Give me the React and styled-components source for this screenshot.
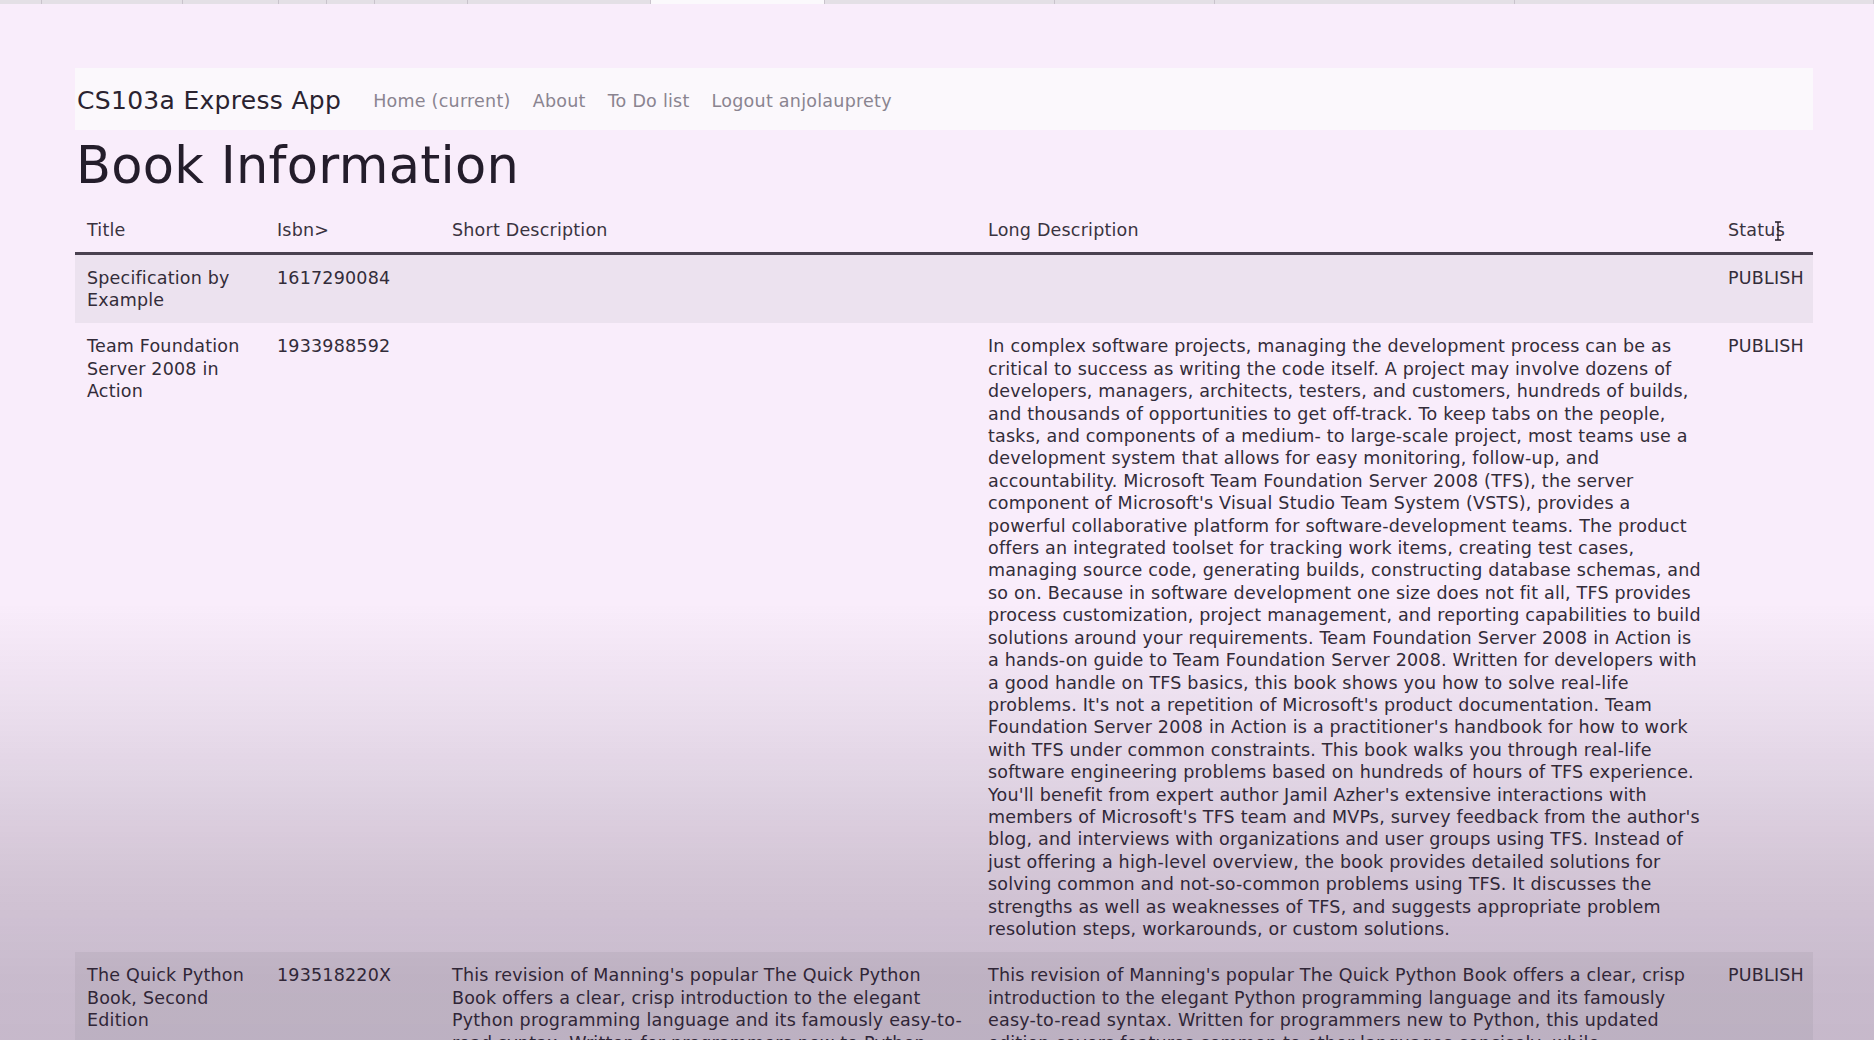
import React from "react";
import styled, { createGlobalStyle } from "styled-components";

const books = [
    {
        title: "Specification by Example",
        isbn: "1617290084",
        shortDescription: "",
        longDescription: "",
        status: "PUBLISH",
    },
    {
        title: "Team Foundation Server 2008 in Action",
        isbn: "1933988592",
        shortDescription: "",
        longDescription:
            "In complex software projects, managing the development process can be as critical to success as writing the code itself. A project may involve dozens of developers, managers, architects, testers, and customers, hundreds of builds, and thousands of opportunities to get off-track. To keep tabs on the people, tasks, and components of a medium- to large-scale project, most teams use a development system that allows for easy monitoring, follow-up, and accountability. Microsoft Team Foundation Server 2008 (TFS), the server component of Microsoft's Visual Studio Team System (VSTS), provides a powerful collaborative platform for software-development teams. The product offers an integrated toolset for tracking work items, creating test cases, managing source code, generating builds, constructing database schemas, and so on. Because in software development one size does not fit all, TFS provides process customization, project management, and reporting capabilities to build solutions around your requirements. Team Foundation Server 2008 in Action is a hands-on guide to Team Foundation Server 2008. Written for developers with a good handle on TFS basics, this book shows you how to solve real-life problems. It's not a repetition of Microsoft's product documentation. Team Foundation Server 2008 in Action is a practitioner's handbook for how to work with TFS under common constraints. This book walks you through real-life software engineering problems based on hundreds of hours of TFS experience. You'll benefit from expert author Jamil Azher's extensive interactions with members of Microsoft's TFS team and MVPs, survey feedback from the author's blog, and interviews with organizations and user groups using TFS. Instead of just offering a high-level overview, the book provides detailed solutions for solving common and not-so-common problems using TFS. It discusses the strengths as well as weaknesses of TFS, and suggests appropriate problem resolution steps, workarounds, or custom solutions.",
        status: "PUBLISH",
    },
    {
        title: "The Quick Python Book, Second Edition",
        isbn: "193518220X",
        shortDescription:
            "This revision of Manning's popular The Quick Python Book offers a clear, crisp introduction to the elegant Python programming language and its famously easy-to-read syntax. Written for programmers new to Python, this updated edition covers features common to other languages concisely, while introducing Python's comprehensive standard functions library and unique features in detail.",
        longDescription:
            "This revision of Manning's popular The Quick Python Book offers a clear, crisp introduction to the elegant Python programming language and its famously easy-to-read syntax. Written for programmers new to Python, this updated edition covers features common to other languages concisely, while introducing Python's comprehensive standard functions library and unique features in detail. After exploring Python's syntax, control flow, and basic data structures, the book shows how to create, test, and deploy full applications and larger code libraries.",
        status: "PUBLISH",
    },
];

// browser tab strip peeking in at the very top of the frame
const tabs = [42, 141, 96, 48, 48, 93, 183, 174, 230, 160, 300, 359];

export default function App() {
    return (
        <>
            <GlobalStyle />
            <TabStrip>
                {tabs.map((w, i) => (
                    <Tab key={i} $width={w} $active={i === 7} />
                ))}
            </TabStrip>
            <Container>
                <Navbar>
                    <Brand>CS103a Express App</Brand>
                    <NavList>
                        <NavLink>Home (current)</NavLink>
                        <NavLink>About</NavLink>
                        <NavLink>To Do list</NavLink>
                        <NavLink>Logout anjolauprety</NavLink>
                    </NavList>
                </Navbar>
                <Heading>Book Information</Heading>
                <BookTable>
                    <colgroup>
                        <col style={{ width: 190 }} />
                        <col style={{ width: 175 }} />
                        <col style={{ width: 536 }} />
                        <col style={{ width: 740 }} />
                        <col style={{ width: 97 }} />
                    </colgroup>
                    <thead>
                        <tr>
                            <Th>Title</Th>
                            <Th>Isbn&gt;</Th>
                            <Th>Short Description</Th>
                            <Th>Long Description</Th>
                            <Th>
                                Status
                                <Cursor viewBox="0 0 8 20">
                                    <path d="M1 1h2.5l0.5 0.6 0.5-0.6H7M4 1.6v16.8M1 19h2.5l0.5-0.6 0.5 0.6H7" stroke="#1c1620" strokeWidth="1.3" fill="none" />
                                </Cursor>
                            </Th>
                        </tr>
                    </thead>
                    <tbody>
                        {books.map((book, i) => (
                            <Row key={book.isbn} $striped={i % 2 === 0}>
                                <Td>{book.title}</Td>
                                <Td>{book.isbn}</Td>
                                <Td>{book.shortDescription}</Td>
                                <Td>{book.longDescription}</Td>
                                <Td>{book.status}</Td>
                            </Row>
                        ))}
                    </tbody>
                </BookTable>
            </Container>
            <Vignette />
        </>
    );
}

const GlobalStyle = createGlobalStyle`
    body {
        margin: 0;
        background-color: #f9edfb;
        font-family: "DejaVu Sans", "Liberation Sans", sans-serif;
        color: #2f2835;
    }
`;

const TabStrip = styled.div`
    height: 4px;
    display: flex;
    background-color: #dcd7de;
    overflow: hidden;
`;

const Tab = styled.div`
    flex: 0 0 ${(p) => p.$width}px;
    height: 100%;
    box-sizing: border-box;
    border-right: 1px solid #c9c3cc;
    background-color: ${(p) => (p.$active ? "#fbf9fc" : "#e4e0e6")};
`;

const Container = styled.div`
    padding: 64px 61px 0 75px;
`;

const Navbar = styled.nav`
    height: 62px;
    box-sizing: border-box;
    padding: 4px 0 0 2px;
    display: flex;
    align-items: center;
    background-color: #fbf8fc;
`;

const Brand = styled.div`
    font-size: 25px;
    line-height: 1.5;
    letter-spacing: 0.3px;
    color: #2a2330;
    margin-right: 21px;
`;

const NavList = styled.div`
    display: flex;
    align-items: center;
`;

const NavLink = styled.div`
    font-size: 17.5px;
    line-height: 1.5;
    letter-spacing: 0.25px;
    color: #8a8490;
    padding: 0 11px;
`;

const Heading = styled.h1`
    font-size: 51px;
    font-weight: 400;
    line-height: 1.2;
    letter-spacing: 0.3px;
    color: #241d2b;
    margin: 5px 0 11px 1px;
`;

const BookTable = styled.table`
    width: 100%;
    border-collapse: collapse;
    table-layout: fixed;
    font-size: 17.5px;
    line-height: 22.4px;
    letter-spacing: 0.2px;
`;

const Th = styled.th`
    position: relative;
    text-align: left;
    font-weight: 400;
    color: #3a3340;
    padding: 12px 12px 10px;
    border-bottom: 3px solid #4a4150;
    vertical-align: bottom;
`;

const Cursor = styled.svg`
    position: absolute;
    left: 58px;
    top: 14px;
    width: 8px;
    height: 20px;
`;

const Row = styled.tr`
    background-color: ${(p) => (p.$striped ? "#ece2ef" : "transparent")};
`;

const Td = styled.td`
    padding: 12px;
    vertical-align: top;
    color: #332c39;
`;

const Vignette = styled.div`
    position: fixed;
    inset: 0;
    pointer-events: none;
    background: linear-gradient(
        to bottom,
        rgba(40, 20, 50, 0) 0%,
        rgba(40, 20, 50, 0) 58%,
        rgba(40, 20, 50, 0.08) 70%,
        rgba(40, 20, 50, 0.18) 84%,
        rgba(40, 20, 50, 0.23) 94%,
        rgba(40, 20, 50, 0.24) 100%
    );
`;
